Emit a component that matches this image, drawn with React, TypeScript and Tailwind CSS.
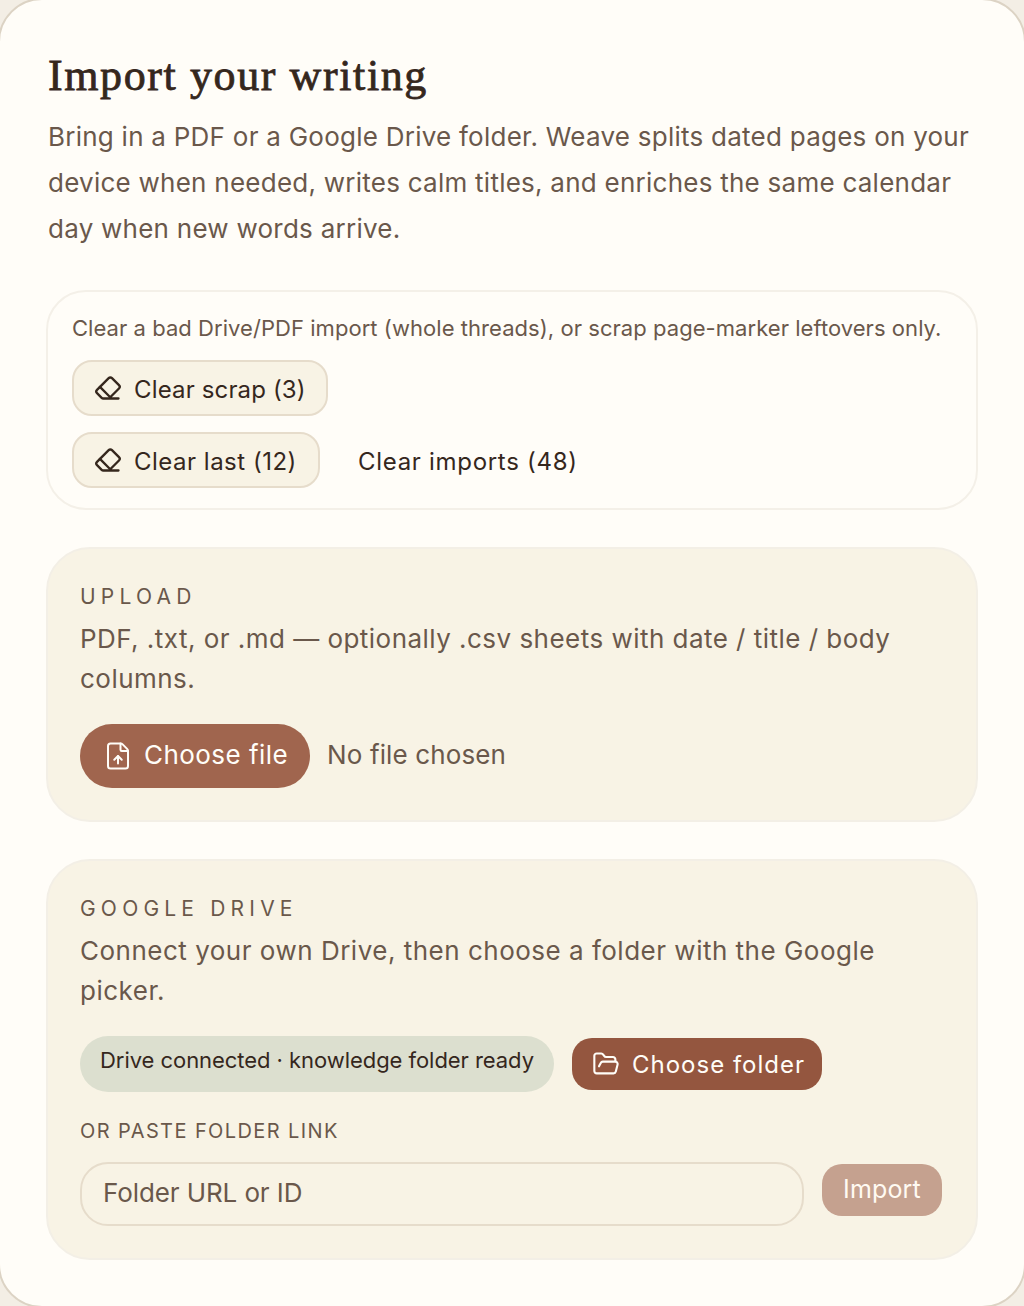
import React from 'react';
import { Eraser, FileUp, FolderOpen } from 'lucide-react';

const sans = "font-['Inter','Noto_Sans',sans-serif]";

const SoftButton: React.FC<{ label: string; className: string }> = ({ label, className }) => (
  <button className={`flex h-14 items-center gap-[12px] rounded-[20px] border-2 border-[#e6dccb] bg-[#f8f3e5] pl-[20px] text-[24px] text-[#35271d] ${className}`}>
    <Eraser size={28} strokeWidth={2} />
    <span className="pt-[4px]">{label}</span>
  </button>
);

const SectionLabel: React.FC<{ children: React.ReactNode }> = ({ children }) => (
  <div className="text-[21px] leading-[28px] tracking-[5.2px] text-[#6a584b]">{children}</div>
);

export default function App() {
  return (
    <div className={`h-[1306px] overflow-hidden bg-[#f3eee5] ${sans}`}>
      <div className="-m-[2px] h-[1310px] rounded-[44px] border-2 border-[#dcd3c4] bg-[#fffdf8] px-[46px] pt-[51px]">
        <h1 className="pl-[2px] font-['Liberation_Serif',serif] text-[44px] leading-[50px] tracking-[1.6px] text-[#35271d] [-webkit-text-stroke:0.8px_#35271d]">
          Import your writing
        </h1>
        <p className="mt-[13px] pl-[2px] text-[26px] leading-[46px] tracking-[0.25px] text-[#6a584b]">
          Bring in a PDF or a Google Drive folder. Weave splits dated pages on your device when needed, writes calm titles, and enriches the same calendar day when new words arrive.
        </p>

        <section className="mt-[38px] h-[220px] rounded-[40px] border-2 border-[#f4f0e8] px-[24px] pt-[20px]">
          <p className="text-[22px] leading-[32px] tracking-[0.05px] whitespace-nowrap text-[#6a584b]">
            Clear a bad Drive/PDF import (whole threads), or scrap page-marker leftovers only.
          </p>
          <div className="mt-[16px]">
            <SoftButton label="Clear scrap (3)" className="w-[256px] tracking-[0.15px]" />
          </div>
          <div className="mt-4 flex items-center gap-[38px]">
            <SoftButton label="Clear last (12)" className="w-[248px] tracking-[0.5px]" />
            <span className="pt-[4px] text-[24px] tracking-[0.7px] text-[#35271d]">Clear imports (48)</span>
          </div>
        </section>

        <section className="mt-[37px] h-[275px] rounded-[44px] border-2 border-[#f3efe6] bg-[#f8f3e5] px-[32px] pt-[34px]">
          <SectionLabel>UPLOAD</SectionLabel>
          <p className="mt-[8px] text-[26px] leading-[40px] tracking-[0.47px] text-[#6a584b]">
            PDF, .txt, or .md — optionally .csv sheets with date / title / body columns.
          </p>
          <div className="mt-[25px] flex items-center gap-[17px]">
            <div className="flex h-16 w-[230px] items-center gap-[11px] rounded-full bg-[#a0654e] pl-[23px] text-[26px] tracking-[0.45px] text-[#fffdf8]">
              <FileUp size={30} strokeWidth={1.6} />
              <span className="pb-[4px]">Choose file</span>
            </div>
            <span className="pb-[4px] text-[26px] tracking-[0.13px] text-[#6a584b]">No file chosen</span>
          </div>
        </section>

        <section className="mt-[37px] h-[401px] rounded-[44px] border-2 border-[#f3efe6] bg-[#f8f3e5] px-[32px] pt-[34px]">
          <SectionLabel>GOOGLE DRIVE</SectionLabel>
          <p className="mt-[8px] text-[26px] leading-[40px] tracking-[0.5px] text-[#6a584b]">
            Connect your own Drive, then choose a folder with the Google picker.
          </p>
          <div className="mt-[25px] flex items-center gap-[18px]">
            <div className="flex h-14 w-[474px] items-center rounded-full bg-[#dcdfcf] pb-[8px] pl-[20px] text-[22px] tracking-[-0.05px] whitespace-nowrap text-[#35271d]">
              Drive connected · knowledge folder ready
            </div>
            <div className="flex h-[52px] w-[250px] items-center gap-[12px] rounded-[20px] bg-[#94563f] pl-[20px] text-[24px] tracking-[1px] text-[#fffdf8]">
              <FolderOpen size={28} strokeWidth={1.8} />
              <span className="pt-[2px]">Choose folder</span>
            </div>
          </div>
          <div className="mt-[25px] text-[20px] leading-[28px] tracking-[1.4px] text-[#6a584b]">OR PASTE FOLDER LINK</div>
          <div className="mt-[17px] flex items-start gap-[18px]">
            <input
              readOnly
              placeholder="Folder URL or ID"
              className="h-16 w-[724px] rounded-[28px] border-2 border-[#e6dccb] bg-transparent px-[21px] pb-[4px] text-[26px] tracking-[-0.1px] text-[#35271d] placeholder:text-[#6a584b]"
            />
            <div className="mt-[2px] flex h-[52px] w-[120px] items-center justify-center rounded-[20px] bg-[#c5a18f] text-[25px] tracking-[0.15px] text-[#fffaf2]">
              Import
            </div>
          </div>
        </section>
      </div>
    </div>
  );
}
